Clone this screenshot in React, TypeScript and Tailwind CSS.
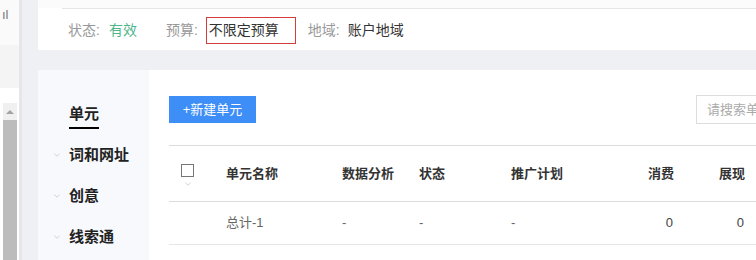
import { ChevronDown } from "lucide-react";

const font = { fontFamily: '"Liberation Sans", "Noto Sans CJK SC", sans-serif' };

function SideStrip() {
  return (
    <div className="flex h-full w-[19px] shrink-0 flex-col bg-white">
      <div className="h-[45px] bg-[#fafafa] pl-[2px] pt-[8px] text-[13px] leading-none text-[#777]">
        ıl
      </div>
      <div className="h-[43px] bg-[#f4f4f4]" />
      <div className="h-[15px]" />
      <div className="ml-[3px] flex w-[14px] flex-1 flex-col bg-[#f0f0f0]">
        <div className="flex h-[17px] items-center justify-center">
          <div className="h-0 w-0 border-x-[4px] border-b-[4px] border-x-transparent border-b-[#a3a3a3]" />
        </div>
        <div className="flex-1 bg-[#bcbcbc]" />
      </div>
    </div>
  );
}

function InfoBar() {
  return (
    <div className="h-[50px] bg-white">
      <div className="h-[8px] bg-[#fbfbfb]" />
      <div className="ml-[24px] border-t border-[#e6e6e6]" />
      <div className="flex h-[41px] items-center pl-[30px] pt-[2px] text-[14px]">
        <span className="text-[#999]">状态:</span>
        <span className="ml-[9px] text-[#4fb58b]">有效</span>
        <span className="ml-[29px] text-[#999]">预算:</span>
        <span className="ml-[8px] flex h-[27px] w-[90px] items-center border border-[#d43b3b] pl-[2px] text-[#333]">
          不限定预算
        </span>
        <span className="ml-[12px] text-[#999]">地域:</span>
        <span className="ml-[8px] text-[#333]">账户地域</span>
      </div>
    </div>
  );
}

function SideNav() {
  const items = ["词和网址", "创意", "线索通"];
  return (
    <div className="w-[111px] shrink-0 bg-[#f7f9fc] pl-[14px] pt-[32px]">
      <div className="ml-[17px] inline-block border-b-2 border-black pb-[3px] text-[15px] font-bold leading-[20px] text-[#222]">
        单元
      </div>
      <div className="mt-[16px] flex flex-col gap-[21px]">
        {items.map((item) => (
          <div className="flex h-[20px] items-center" key={item}>
            <ChevronDown className="h-[10px] w-[10px] text-[#aaa]" strokeWidth={1.25} />
            <span className="ml-[7px] text-[15px] font-bold leading-[20px] text-[#222]">
              {item}
            </span>
          </div>
        ))}
      </div>
    </div>
  );
}

const cols = "grid grid-cols-[57px_116px_77px_92px_100px_63px_71px_60px]";

function UnitTable() {
  return (
    <div className="mt-[21px] w-[700px] text-[13px]">
      <div className={`${cols} h-[57px] items-center border-y border-[#dcdcdc] font-bold text-[#333]`}>
        <div className="flex flex-col items-center pr-[20px] pt-[6px]">
          <div className="h-[13px] w-[13px] border border-[#777] bg-white" />
          <ChevronDown className="mt-[2px] h-[10px] w-[10px] text-[#aaa]" strokeWidth={1.25} />
        </div>
        <div>单元名称</div>
        <div>数据分析</div>
        <div>状态</div>
        <div>推广计划</div>
        <div className="text-right">消费</div>
        <div className="text-right">展现</div>
        <div />
      </div>
      <div className={`${cols} h-[43px] items-center border-b border-[#e6e6e6] text-[#666]`}>
        <div />
        <div>总计-1</div>
        <div>-</div>
        <div>-</div>
        <div>-</div>
        <div className="pr-[1px] text-right text-[#444]">0</div>
        <div className="pr-[1px] text-right text-[#444]">0</div>
        <div />
      </div>
    </div>
  );
}

export default function App() {
  return (
    <div className="flex h-[260px] w-[756px] overflow-hidden bg-[#eef0f4]" style={font}>
      <SideStrip />
      <div className="w-[3px] shrink-0 bg-[#e4e6ea]" />
      <div className="flex min-w-0 flex-1 flex-col pl-[16px]">
        <InfoBar />
        <div className="mt-[20px] flex flex-1 bg-white">
          <SideNav />
          <div className="min-w-0 flex-1 overflow-hidden pl-[20px] pt-[26px]">
            <div className="flex items-start justify-between">
              <button className="h-[27px] w-[87px] bg-[#3d8ef6] text-[13px] text-white">
                +新建单元
              </button>
              <div className="-mr-[40px] -mt-[1px] flex h-[29px] w-[100px] items-center border border-[#dcdcdc] pl-[10px] text-[13px] text-[#aaa]">
                请搜索单元
              </div>
            </div>
            <UnitTable />
          </div>
        </div>
      </div>
    </div>
  );
}
